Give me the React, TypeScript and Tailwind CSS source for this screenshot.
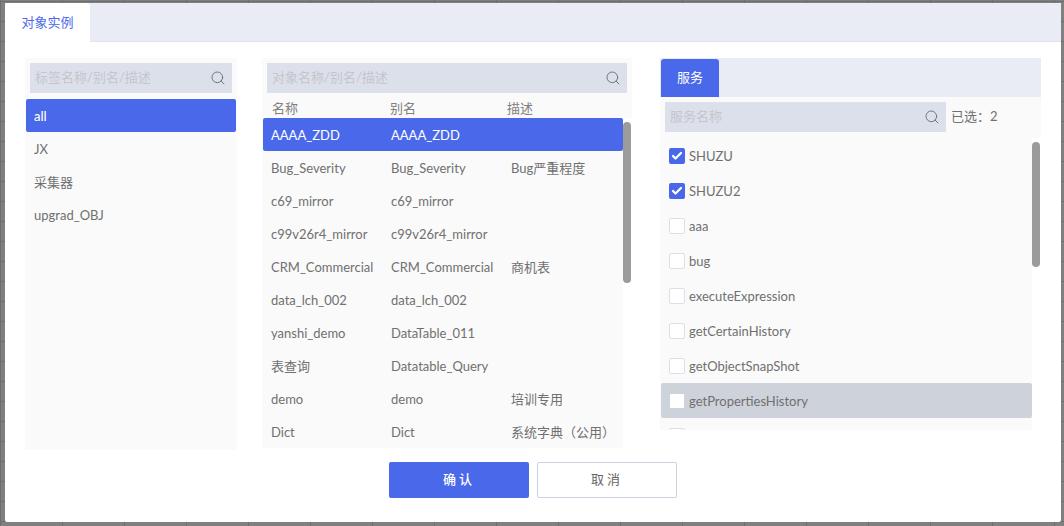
import { Check, Search } from 'lucide-react';

const font = { fontFamily: 'Lato, "Noto Sans CJK SC", sans-serif' };

const tags = ['all', 'JX', '采集器', 'upgrad_OBJ'];

const objects = [
    ['AAAA_ZDD', 'AAAA_ZDD', ''],
    ['Bug_Severity', 'Bug_Severity', 'Bug严重程度'],
    ['c69_mirror', 'c69_mirror', ''],
    ['c99v26r4_mirror', 'c99v26r4_mirror', ''],
    ['CRM_Commercial', 'CRM_Commercial', '商机表'],
    ['data_lch_002', 'data_lch_002', ''],
    ['yanshi_demo', 'DataTable_011', ''],
    ['表查询', 'Datatable_Query', ''],
    ['demo', 'demo', '培训专用'],
    ['Dict', 'Dict', '系统字典（公用）'],
];

const services = [
    { name: 'SHUZU', checked: true },
    { name: 'SHUZU2', checked: true },
    { name: 'aaa' },
    { name: 'bug' },
    { name: 'executeExpression' },
    { name: 'getCertainHistory' },
    { name: 'getObjectSnapShot' },
    { name: 'getPropertiesHistory', hover: true },
    { name: '' },
];

const SearchBox = ({ placeholder, className }: { placeholder: string; className: string }) => (
    <div className={`flex h-[30px] items-center justify-between bg-[#dce0ea] pl-[5px] pr-[6px] ${className}`}>
        <span className="text-[13px] text-[#c4c6cc]">{placeholder}</span>
        <Search className="h-[16px] w-[16px] text-[#6f7480]" strokeWidth={1.5} />
    </div>
);

const App = () => {
    return (
        <div
            className="h-[526px] w-[1064px] overflow-hidden bg-[#808080] bg-[linear-gradient(#6e6e6e_1px,transparent_1px),linear-gradient(90deg,#6e6e6e_1px,transparent_1px)] bg-[size:62px_20px] bg-[position:0_1px] pl-[5px] pt-[3px]"
            style={font}
        >
            <div className="h-[519px] w-[1056px] rounded-[2px] bg-white">
                <div className="flex h-[39px] border-b border-[#e0e3ec] bg-[#e9ecf5]">
                    <div className="flex h-[39px] w-[85px] items-center justify-center rounded-t-[3px] bg-white text-[13px] text-[#4a69ea]">
                        对象实例
                    </div>
                </div>

                <div className="flex items-start pt-[16px]">
                    {/* tags */}
                    <div className="ml-[20px] h-[392px] w-[212px] bg-[#fafafa]">
                        <div className="px-[5px] pt-[5px]">
                            <SearchBox placeholder="标签名称/别名/描述" className="w-[202px]" />
                        </div>
                        <div className="mt-[6px] px-[1px]">
                            {tags.map((t, i) => (
                                <div
                                    key={t}
                                    className={`flex h-[33px] items-center rounded-[2px] pl-[8px] pt-[2px] text-[13px] ${i === 0 ? 'bg-[#4a69ea] font-medium text-white' : 'text-[#707070]'}`}
                                >
                                    {t}
                                </div>
                            ))}
                        </div>
                    </div>

                    {/* objects */}
                    <div className="ml-[25px] h-[390px] w-[370px] bg-[#fafafa]">
                        <div className="px-[5px] pt-[5px]">
                            <SearchBox placeholder="对象名称/别名/描述" className="w-[360px]" />
                        </div>
                        <div className="flex h-[25px] items-center pt-[5px] text-[13px] leading-none text-[#808080]">
                            <span className="ml-[10px] w-[118px]">名称</span>
                            <span className="w-[117px]">别名</span>
                            <span>描述</span>
                        </div>
                        <div className="relative h-[330px] bg-white">
                            <div className="h-[330px] w-[361px] bg-[#fafafa] pl-[1px]">
                                {objects.map((o, i) => (
                                    <div
                                        key={o[0]}
                                        className={`flex h-[33px] w-[360px] items-center rounded-[2px] pt-[2px] text-[13px] ${i === 0 ? 'bg-[#4a69ea] text-white' : 'text-[#707070]'}`}
                                    >
                                        <span className="ml-[8px] w-[120px] whitespace-nowrap">{o[0]}</span>
                                        <span className="w-[120px] whitespace-nowrap">{o[1]}</span>
                                        <span className="whitespace-nowrap">{o[2]}</span>
                                    </div>
                                ))}
                            </div>
                            <div className="absolute left-[361px] top-[4px] h-[161px] w-[8px] rounded-[4px] bg-[#9b9b9b]" />
                        </div>
                    </div>

                    {/* services */}
                    <div className="ml-[28px] h-[372px] w-[381px] bg-[#fafafa]">
                        <div className="flex h-[39px] items-end bg-[#e9ecf5] pl-[1px]">
                            <div className="flex h-[38px] w-[58px] items-center justify-center rounded-t-[3px] bg-[#4a69ea] text-[13px] text-white">
                                服务
                            </div>
                        </div>
                        <div className="flex items-center pl-[5px] pt-[5px]">
                            <SearchBox placeholder="服务名称" className="w-[281px]" />
                            <span className="ml-[5px] text-[13px] text-[#707070]">已选：2</span>
                        </div>
                        <div className="relative mt-[6px] h-[292px] overflow-hidden bg-white">
                            <div className="h-[292px] w-[372px] bg-[#fafafa] pl-[1px]">
                                {services.map((s) => (
                                    <div
                                        key={s.name || 'more'}
                                        className={`flex h-[35px] w-[371px] items-center rounded-[2px] pl-[8px] text-[13px] text-[#707070] ${s.hover ? 'bg-[#ced2db]' : ''}`}
                                    >
                                        <span
                                            className={`flex h-[16px] w-[16px] items-center justify-center rounded-[2px] ${s.checked ? 'bg-[#4a69ea]' : 'border bg-white'} ${s.hover ? 'border-[#ced2db]' : 'border-[#dcdfe6]'}`}
                                        >
                                            {s.checked && <Check className="h-[12px] w-[12px] text-white" strokeWidth={4.5} />}
                                        </span>
                                        <span className="ml-[4px] pt-[2px]">{s.name}</span>
                                    </div>
                                ))}
                            </div>
                            <div className="absolute left-[372px] top-[4px] h-[125px] w-[8px] rounded-[4px] bg-[#9b9b9b]" />
                        </div>
                    </div>
                </div>

                <div className="ml-[384px] mt-[12px] flex gap-[8px]">
                    <button className="h-[36px] w-[140px] rounded-[2px] bg-[#4a69ea] text-[13px] font-medium tracking-[3px] text-white">
                        确认
                    </button>
                    <button className="h-[36px] w-[140px] rounded-[2px] border border-[#ced2de] bg-white text-[13px] tracking-[3px] text-[#666]">
                        取消
                    </button>
                </div>
            </div>
        </div>
    );
};

export default App;
